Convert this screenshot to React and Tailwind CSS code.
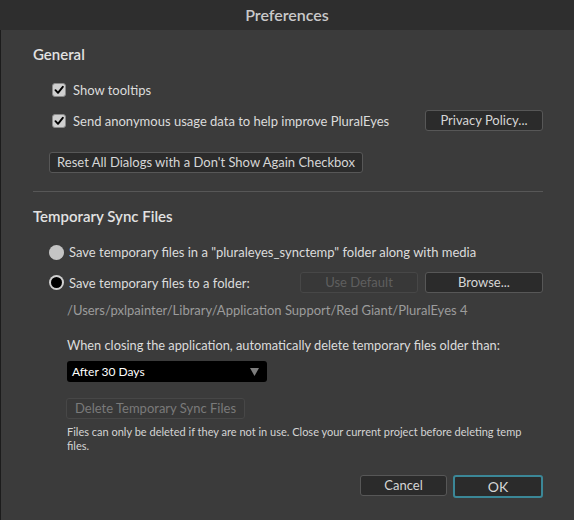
import React from 'react';

const Btn = ({ children, className = '', disabled }) => (
  <button
    className={`h-[21px] rounded-[3px] border text-[13px] leading-none ${
      disabled ? 'border-[#474747] bg-[#383838] text-[#5f5f5f]' : 'border-[#575757] bg-[#2b2b2b] text-[#d6d6d6]'
    } ${className}`}
  >
    {children}
  </button>
);

const Check = ({ label }) => (
  <label className="flex items-center gap-[7px] leading-[18px]">
    <span className="flex h-[14px] w-[14px] items-center justify-center rounded-[3px] border border-[#8a8a8a] bg-[#cfcfcf]">
      <svg width="10" height="10" viewBox="0 0 10 10">
        <path d="M1.5 5.2 L4 7.8 L8.8 1.8" fill="none" stroke="#000" strokeWidth="1.9" strokeLinecap="round" strokeLinejoin="round" />
      </svg>
    </span>
    <span>{label}</span>
  </label>
);

const Radio = ({ on, label }) => (
  <label className="flex items-center gap-[5px] leading-[18px]">
    {on ? (
      <span className="flex h-[15px] w-[15px] items-center justify-center rounded-full bg-[#d0d0d0]">
        <span className="h-[11px] w-[11px] rounded-full bg-black" />
      </span>
    ) : (
      <span className="h-[15px] w-[15px] rounded-full bg-[#c4c4c4]" />
    )}
    <span>{label}</span>
  </label>
);

export default function App() {
  return (
    <div className="flex h-[520px] w-[574px] flex-col bg-[#3b3b3b] font-['Lato',sans-serif] text-[13px] leading-[18px] text-[#dcdcdc]">
      <div className="flex h-[30px] items-center justify-center bg-[#2e2e2e] text-[16px] font-semibold text-[#c9c9c9]">
        Preferences
      </div>
      <div className="flex flex-1 border-l border-[#1c1c1c]">
        <div className="flex flex-1 flex-col pl-[32px] pr-[31px]">
          <div className="mt-[14px] text-[15px] leading-[20px] font-semibold text-[#e2e2e2]">General</div>
          <div className="mt-[17px] pl-[19px]">
            <Check label="Show tooltips" />
          </div>
          <div className="mt-[11px] flex items-center justify-between pl-[19px]">
            <Check label="Send anonymous usage data to help improve PluralEyes" />
            <Btn className="w-[118px]">Privacy Policy...</Btn>
          </div>
          <div className="mt-[21px] pl-[16px]">
            <Btn className="w-[314px]">Reset All Dialogs with a Don't Show Again Checkbox</Btn>
          </div>
          <div className="mt-[18px] h-px bg-[#575757]" />
          <div className="mt-[14px] text-[15px] leading-[20px] font-semibold text-[#e2e2e2]">Temporary Sync Files</div>
          <div className="mt-[17px] pl-[16px]">
            <Radio label={'Save temporary files in a "pluraleyes_synctemp" folder along with media'} />
          </div>
          <div className="mt-[11px] flex items-center pl-[16px]">
            <Radio on label="Save temporary files to a folder:" />
            <div className="ml-auto flex gap-[7px]">
              <Btn disabled className="w-[118px]">Use Default</Btn>
              <Btn className="w-[118px]">Browse...</Btn>
            </div>
          </div>
          <div className="mt-[8px] pl-[34px] text-[#9c9c9c]">
            /Users/pxlpainter/Library/Application Support/Red Giant/PluralEyes 4
          </div>
          <div className="mt-[17px] pl-[34px] text-[12.8px]">
            When closing the application, automatically delete temporary files older than:
          </div>
          <div className="mt-[7px] pl-[34px]">
            <div className="flex h-[21px] w-[200px] items-center justify-between rounded-[3px] bg-black pl-[5px] pr-[8px] text-[12px] text-white">
              <span>After 30 Days</span>
              <svg width="9" height="8" viewBox="0 0 9 8">
                <path d="M0 0 H9 L4.5 8 Z" fill="#7d7d7d" />
              </svg>
            </div>
          </div>
          <div className="mt-[16px] pl-[33px]">
            <Btn disabled className="w-[179px] border-[#555] text-[#7a7a7a]">Delete Temporary Sync Files</Btn>
          </div>
          <div className="mt-[6px] pl-[34px] text-[11px] leading-[14px] text-[#d4d4d4]">
            Files can only be deleted if they are not in use. Close your current project before deleting temp files.
          </div>
          <div className="mt-auto mb-[22px] flex justify-end gap-[6px]">
            <Btn className="w-[87px]">Cancel</Btn>
            <button className="h-[23px] w-[90px] rounded-[3px] border-2 border-[#3b8797] bg-[#2b2b2b] text-[14px] leading-none text-[#d6d6d6]">
              OK
            </button>
          </div>
        </div>
      </div>
    </div>
  );
}
